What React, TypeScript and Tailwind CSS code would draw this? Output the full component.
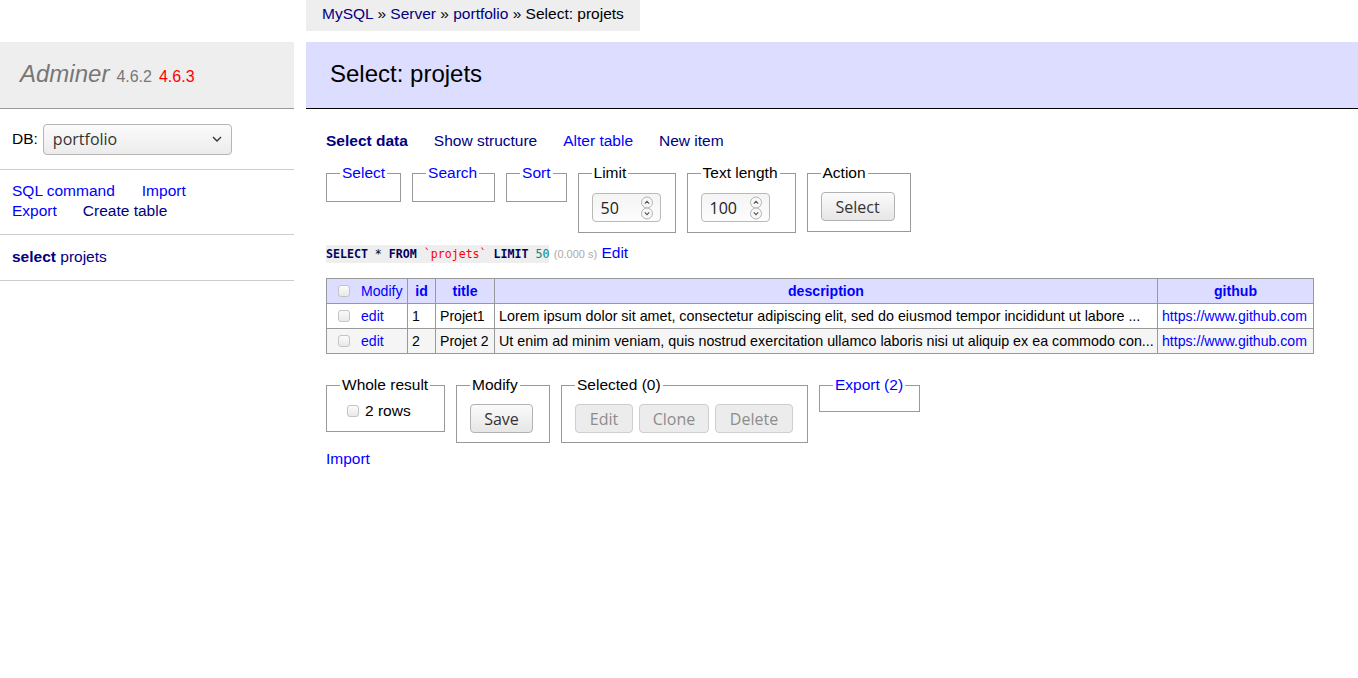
import React from 'react'

const blue = 'text-[#0000ff]'
const navy = 'text-[#000080]'
const ui = "font-['Open_Sans',sans-serif]"

function Checkbox() {
  return (
    <span className="inline-block w-[12px] h-[12px] shrink-0 rounded-[3px] border border-[#c4c4c4] bg-linear-to-b from-[#fbfbfb] to-[#e9e9e9]" />
  )
}

function Spinner() {
  return (
    <svg width="14" height="24" viewBox="0 0 14 24" fill="none">
      <circle cx="7" cy="6.5" r="5.5" fill="#f7f7f7" stroke="#b4b4b4" />
      <circle cx="7" cy="17.5" r="5.5" fill="#f7f7f7" stroke="#b4b4b4" />
      <path d="M4.8 7.6 L7 5.4 L9.2 7.6" stroke="#555" strokeWidth="1.1" />
      <path d="M4.8 16.4 L7 18.6 L9.2 16.4" stroke="#555" strokeWidth="1.1" />
    </svg>
  )
}

function NumberInput({ value, width }: { value: string; width: string }) {
  return (
    <div
      className={`flex items-center h-[29px] ${width} rounded-[4px] border border-[#b9b9b9] bg-linear-to-b from-[#f4f4f4] to-[#fdfdfd] pl-[8px] pr-[6px] ${ui}`}
    >
      <span className="flex-1 text-[16px] leading-[20px] text-[#222]">{value}</span>
      <Spinner />
    </div>
  )
}

function Button({ label, width, disabled }: { label: string; width: string; disabled?: boolean }) {
  return (
    <div
      className={`flex items-center justify-center h-[29px] ${width} rounded-[4px] border ${ui} text-[16px] ${
        disabled
          ? 'border-[#cfcfcf] bg-[#ececec] text-[#8c8c8c]'
          : 'border-[#b2b2b2] bg-linear-to-b from-[#fbfbfb] to-[#e6e6e6] text-[#333]'
      }`}
    >
      {label}
    </div>
  )
}

function Box({
  legend,
  width,
  pad,
  children,
}: {
  legend: React.ReactNode
  width: string
  pad: string
  children?: React.ReactNode
}) {
  return (
    <fieldset className={`border border-[#999] px-[13px] ${pad} ${width}`}>
      <legend className="px-[2px] leading-[20px] whitespace-nowrap">{legend}</legend>
      {children}
    </fieldset>
  )
}

function Sidebar() {
  return (
    <div className="w-[294px] shrink-0 pt-[42px]">
      <h1 className="h-[67px] box-border border-b border-[#999] bg-[#eee] pl-[20px] pt-[17px] leading-[30px] text-[#777] whitespace-nowrap">
        <span className="italic text-[24px]">Adminer</span>
        <span className="text-[16px] ml-[7px]">4.6.2</span>
        <span className="text-[16px] ml-[7px] text-[#f00]">4.6.3</span>
      </h1>
      <div className="h-[61px] box-border border-b border-[#ccc] px-[12px] flex items-center">
        <span>DB:</span>
        <div
          className={`ml-[5px] w-[189px] h-[31px] rounded-[4px] border border-[#b5b5b5] bg-linear-to-b from-[#fbfbfb] to-[#ececec] flex items-center justify-between pl-[9px] pr-[9px] ${ui} text-[16px] text-[#333]`}
        >
          <span>portfolio</span>
          <svg width="10" height="6" viewBox="0 0 10 6" fill="none">
            <path d="M1 1 L5 5 L9 1" stroke="#333" strokeWidth="1.4" />
          </svg>
        </div>
      </div>
      <div className="h-[65px] box-border border-b border-[#ccc] px-[12px] pt-[11px]">
        <div className="flex">
          <a className={`${blue} mr-[27px]`}>SQL command</a>
          <a className={blue}>Import</a>
        </div>
        <div className="flex">
          <a className={`${blue} mr-[26px]`}>Export</a>
          <a className={navy}>Create table</a>
        </div>
      </div>
      <div className="h-[46px] box-border border-b border-[#ccc] px-[12px] pt-[12px]">
        <a className={navy}>
          <b>select</b> projets
        </a>
      </div>
    </div>
  )
}

const rows = [
  {
    id: '1',
    title: 'Projet1',
    description: 'Lorem ipsum dolor sit amet, consectetur adipiscing elit, sed do eiusmod tempor incididunt ut labore ...',
  },
  {
    id: '2',
    title: 'Projet 2',
    description: 'Ut enim ad minim veniam, quis nostrud exercitation ullamco laboris nisi ut aliquip ex ea commodo con...',
  },
]

function DataTable() {
  const cell = 'border border-[#999] px-[4px] py-[2px] leading-[20px] whitespace-nowrap overflow-hidden'
  return (
    <table className="table-fixed border-collapse w-[987px] mt-[14px] text-[14.1px]">
      <colgroup>
        <col className="w-[81px]" />
        <col className="w-[28px]" />
        <col className="w-[59px]" />
        <col className="w-[663px]" />
        <col className="w-[156px]" />
      </colgroup>
      <thead>
        <tr className="bg-[#ddf]">
          <th className={`${cell} font-normal text-left`}>
            <div className="flex items-center pl-[7px]">
              <Checkbox />
              <a className={`${blue} ml-[11px]`}>Modify</a>
            </div>
          </th>
          <th className={`${cell} ${blue}`}>id</th>
          <th className={`${cell} ${blue}`}>title</th>
          <th className={`${cell} ${blue}`}>description</th>
          <th className={`${cell} ${blue}`}>github</th>
        </tr>
      </thead>
      <tbody>
        {rows.map((r, i) => (
          <tr key={r.id} className={i % 2 ? 'bg-[#f5f5f5]' : 'bg-white'}>
            <td className={cell}>
              <div className="flex items-center pl-[7px]">
                <Checkbox />
                <a className={`${blue} ml-[11px]`}>edit</a>
              </div>
            </td>
            <td className={cell}>{r.id}</td>
            <td className={cell}>{r.title}</td>
            <td className={`${cell} text-[14.3px]`}>{r.description}</td>
            <td className={cell}>
              <a className={blue}>https://www.github.com</a>
            </td>
          </tr>
        ))}
      </tbody>
    </table>
  )
}

function Content() {
  return (
    <div className="flex-1 ml-[12px] min-w-0">
      <div className="inline-block h-[31px] bg-[#eee] px-[16px] leading-[27px] whitespace-nowrap">
        <a className={navy}>MySQL</a> » <a className={navy}>Server</a> » <a className={navy}>portfolio</a> » Select: projets
      </div>
      <h2 className="mt-[11px] h-[67px] box-border border-b border-black bg-[#ddf] pl-[24px] pt-[17px] text-[24px] leading-[30px]">
        Select: projets
      </h2>
      <div className="pl-[20px]">
        <div className="flex gap-[26px] mt-[22px]">
          <a className={`${navy} font-bold`}>Select data</a>
          <a className={navy}>Show structure</a>
          <a className={blue}>Alter table</a>
          <a className={navy}>New item</a>
        </div>

        <div className="flex items-start gap-[11px] mt-[12px]">
          <Box legend={<a className={blue}>Select</a>} width="w-[75px]" pad="pt-[9px] pb-[9px]" />
          <Box legend={<a className={blue}>Search</a>} width="w-[83px]" pad="pt-[9px] pb-[9px]" />
          <Box legend={<a className={blue}>Sort</a>} width="w-[60px]" pad="pt-[9px] pb-[9px]" />
          <Box legend="Limit" width="w-[98px]" pad="pt-[10px] pb-[10px]">
            <NumberInput value="50" width="w-[69px]" />
          </Box>
          <Box legend="Text length" width="w-[109px]" pad="pt-[10px] pb-[10px]">
            <NumberInput value="100" width="w-[69px]" />
          </Box>
          <Box legend="Action" width="w-[104px]" pad="pt-[9px] pb-[10px]">
            <Button label="Select" width="w-[74px]" />
          </Box>
        </div>

        <div className="mt-[10px] leading-[20px] whitespace-nowrap">
          <code className="font-['DejaVu_Sans_Mono',monospace] text-[11.6px] bg-[#eee] py-[2px]">
            <b className="text-[#000060]">SELECT</b> * <b className="text-[#000060]">FROM</b>{' '}
            <span className="text-[#f00]">`projets`</span> <b className="text-[#000060]">LIMIT</b>{' '}
            <span className="text-[#088]">50</span>
          </code>{' '}
          <span className="text-[11px] text-[#aaa]">(0.000 s)</span> <a className={blue}>Edit</a>
        </div>

        <DataTable />

        <div className="flex items-start gap-[11px] mt-[21px]">
          <Box legend="Whole result" width="w-[119px]" pad="pt-[6px] pb-[10px]">
            <div className="flex items-center pl-[7px] leading-[20px]">
              <Checkbox />
              <span className="ml-[6px]">2 rows</span>
            </div>
          </Box>
          <Box legend="Modify" width="w-[94px]" pad="pt-[9px] pb-[9px]">
            <Button label="Save" width="w-[63px]" />
          </Box>
          <Box legend="Selected (0)" width="w-[247px]" pad="pt-[9px] pb-[9px]">
            <div className="flex gap-[6px]">
              <Button label="Edit" width="w-[58px]" disabled />
              <Button label="Clone" width="w-[70px]" disabled />
              <Button label="Delete" width="w-[78px]" disabled />
            </div>
          </Box>
          <Box legend={<a className={blue}>Export (2)</a>} width="w-[101px]" pad="pt-[8px] pb-[8px]" />
        </div>

        <div className="mt-[6px]">
          <a className={blue}>Import</a>
        </div>
      </div>
    </div>
  )
}

export default function App() {
  return (
    <div className="flex min-h-[678px] bg-white text-black text-[15.5px] leading-[20px] font-['Liberation_Sans',Arial,sans-serif]">
      <Sidebar />
      <Content />
    </div>
  )
}
